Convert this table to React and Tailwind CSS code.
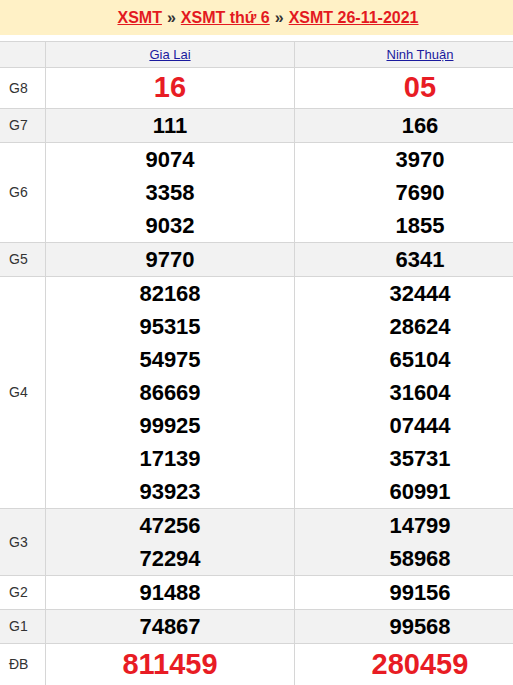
import React from "react";

const rows = [
  { label: "G8", a: ["16"], b: ["05"], big: "g8" },
  { label: "G7", a: ["111"], b: ["166"] },
  { label: "G6", a: ["9074", "3358", "9032"], b: ["3970", "7690", "1855"] },
  { label: "G5", a: ["9770"], b: ["6341"] },
  {
    label: "G4",
    a: ["82168", "95315", "54975", "86669", "99925", "17139", "93923"],
    b: ["32444", "28624", "65104", "31604", "07444", "35731", "60991"],
  },
  { label: "G3", a: ["47256", "72294"], b: ["14799", "58968"] },
  { label: "G2", a: ["91488"], b: ["99156"] },
  { label: "G1", a: ["74867"], b: ["99568"] },
  { label: "ĐB", a: ["811459"], b: ["280459"], big: "db" },
];

function Nums({ list, big }) {
  if (big === "g8") {
    return (
      <div className="h-[40px] flex items-center justify-center text-[29px] font-bold text-[#e81c24]">
        {list[0]}
      </div>
    );
  }
  if (big === "db") {
    return (
      <div className="h-[41px] flex items-center justify-center text-[29px] font-bold text-[#e81c24]">
        {list[0]}
      </div>
    );
  }
  return (
    <div className="flex flex-col">
      {list.map((n, i) => (
        <div key={i} className="h-[33px] leading-[33px] text-center text-[22px] font-bold text-black">
          {n}
        </div>
      ))}
    </div>
  );
}

export default function App() {
  return (
    <div className="w-[513px] h-[685px] overflow-hidden bg-white" style={{ fontFamily: '"Liberation Sans", Arial, sans-serif' }}>
      <div className="w-[545px]">
        {/* breadcrumb */}
        <div className="h-[35px] bg-[#fff1c6] flex items-center justify-center text-[16px] font-bold pt-[1px] pr-[9px]">
          <a className="text-[#e3191f] underline">XSMT</a>
          <span className="text-[#333] mx-[5px]">»</span>
          <a className="text-[#e3191f] underline">XSMT thứ 6</a>
          <span className="text-[#333] mx-[5px]">»</span>
          <a className="text-[#e3191f] underline">XSMT 26-11-2021</a>
        </div>

        <div className="mt-[6px] border-t border-[#d6d6d6]">
          {/* provinces */}
          <div className="flex bg-[#f2f2f2] border-b border-[#d6d6d6] h-[26px]">
            <div className="w-[46px] border-r border-[#d6d6d6]" />
            <div className="w-[249px] border-r border-[#d6d6d6] flex items-center justify-center text-[13px] text-[#1a1a9e] underline">
              Gia Lai
            </div>
            <div className="flex-1 flex items-center justify-center text-[13px] text-[#1a1a9e] underline">
              Ninh Thuận
            </div>
          </div>

          {rows.map((r, i) => (
            <div
              key={r.label}
              className={`flex border-b border-[#d6d6d6] ${i % 2 === 1 ? "bg-[#f2f2f2]" : "bg-white"}`}
            >
              <div className="w-[46px] border-r border-[#d6d6d6] flex items-center pl-[9px] text-[14px] text-[#333]">
                {r.label}
              </div>
              <div className="w-[249px] border-r border-[#d6d6d6]">
                <Nums list={r.a} big={r.big} />
              </div>
              <div className="flex-1">
                <Nums list={r.b} big={r.big} />
              </div>
            </div>
          ))}
        </div>
      </div>
    </div>
  );
}
